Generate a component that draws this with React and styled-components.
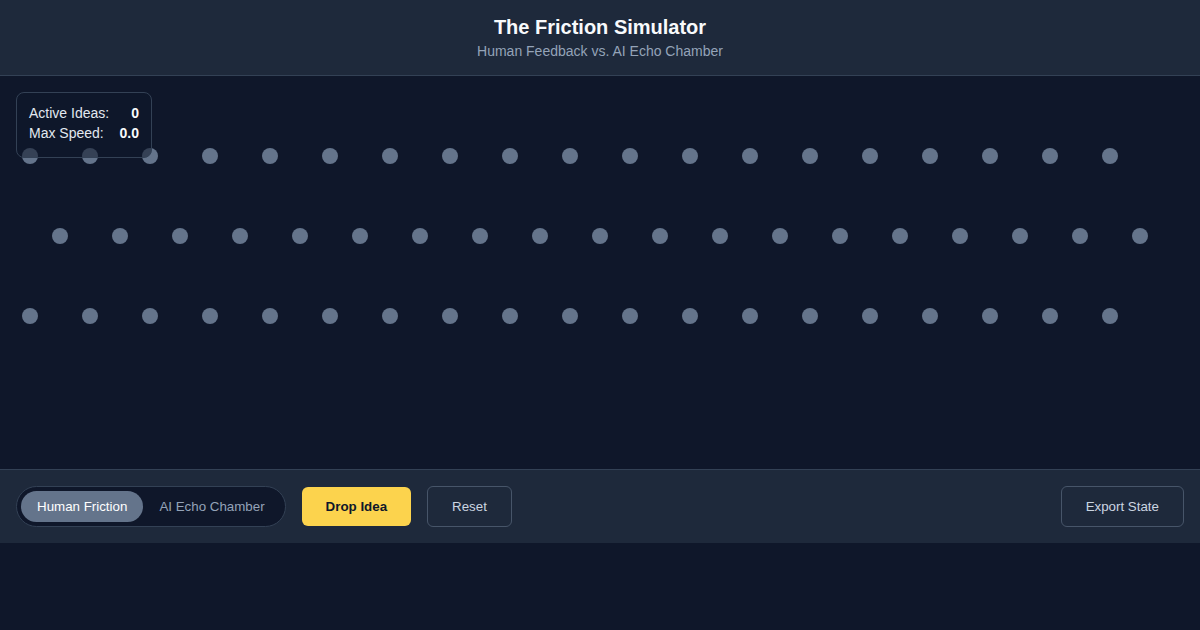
import React, { useState } from 'react'
import styled, { createGlobalStyle } from 'styled-components'

const GlobalStyle = createGlobalStyle`
  * { box-sizing: border-box; }
  body {
    margin: 0;
    background: #0f172a;
    font-family: "Liberation Sans", Arial, sans-serif;
    color: #f1f5f9;
  }
`

const ROWS = [80, 160, 240]
const pegs = ROWS.flatMap((y, r) =>
  Array.from({ length: 19 }, (_, i) => ({ x: (r % 2 ? 60 : 30) + i * 60, y }))
)

const App = () => {
  const [mode, setMode] = useState('human')
  return (
    <>
      <GlobalStyle />
      <Page>
        <Header>
          <Title>The Friction Simulator</Title>
          <Subtitle>Human Feedback vs. AI Echo Chamber</Subtitle>
        </Header>
        <Stage>
          <svg width="1200" height="393" viewBox="0 0 1200 393">
            {pegs.map((p, i) => (
              <circle key={i} cx={p.x} cy={p.y} r="8" fill="#64748b" />
            ))}
          </svg>
          <Stats>
            <StatLabel>Active Ideas:</StatLabel>
            <StatValue>0</StatValue>
            <StatLabel>Max Speed:</StatLabel>
            <StatValue>0.0</StatValue>
          </Stats>
        </Stage>
        <Controls>
          <Toggle>
            <ToggleOption $active={mode === 'human'} onClick={() => setMode('human')}>
              Human Friction
            </ToggleOption>
            <ToggleOption $active={mode === 'ai'} onClick={() => setMode('ai')}>
              AI Echo Chamber
            </ToggleOption>
          </Toggle>
          <PrimaryButton>Drop Idea</PrimaryButton>
          <OutlineButton>Reset</OutlineButton>
          <Spacer />
          <OutlineButton>Export State</OutlineButton>
        </Controls>
      </Page>
    </>
  )
}

export default App

const Page = styled.div`
  display: flex;
  flex-direction: column;
  width: 1200px;
`

const Header = styled.header`
  background: #1e293b;
  border-bottom: 1px solid #334155;
  padding: 15px 16px;
  text-align: center;
`

const Title = styled.h1`
  margin: 0;
  font-size: 20px;
  line-height: 24px;
  font-weight: 700;
  color: #f8fafc;
`

const Subtitle = styled.p`
  margin: 4px 0 0;
  font-size: 14px;
  line-height: 17px;
  color: #94a3b8;
`

const Stage = styled.main`
  position: relative;
  height: 393px;
  background: #0f172a;
  svg { display: block; }
`

const Stats = styled.div`
  position: absolute;
  top: 16px;
  left: 16px;
  width: 136px;
  display: grid;
  grid-template-columns: 1fr auto;
  column-gap: 10px;
  padding: 10px 12px 14px;
  background: rgba(15, 23, 42, 0.55);
  border: 1px solid #334155;
  border-radius: 8px;
  font-size: 14px;
  line-height: 20px;
  color: #e2e8f0;
`

const StatLabel = styled.span``

const StatValue = styled.span`
  font-weight: 700;
  text-align: right;
  color: #f8fafc;
`

const Controls = styled.footer`
  display: flex;
  align-items: center;
  gap: 16px;
  padding: 16px;
  background: #1e293b;
  border-top: 1px solid #334155;
`

const Toggle = styled.div`
  display: flex;
  padding: 4px;
  background: #0f172a;
  border: 1px solid #334155;
  border-radius: 999px;
`

const ToggleOption = styled.button`
  height: 31px;
  padding: 0 16px;
  border: none;
  border-radius: 999px;
  font-family: inherit;
  font-size: 13.333px;
  cursor: pointer;
  background: ${(p) => (p.$active ? '#64748b' : 'transparent')};
  color: ${(p) => (p.$active ? '#ffffff' : '#94a3b8')};
`

const PrimaryButton = styled.button`
  padding: 12px 24px;
  line-height: 15px;
  border: none;
  border-radius: 6px;
  background: #fcd34d;
  color: #0f172a;
  font-family: inherit;
  font-size: 13.333px;
  font-weight: 700;
  cursor: pointer;
`

const OutlineButton = styled.button`
  padding: 12px 24px;
  line-height: 15px;
  border: 1px solid #475569;
  border-radius: 6px;
  background: transparent;
  color: #cbd5e1;
  font-family: inherit;
  font-size: 13.333px;
  cursor: pointer;
`

const Spacer = styled.div`
  flex: 1;
`
